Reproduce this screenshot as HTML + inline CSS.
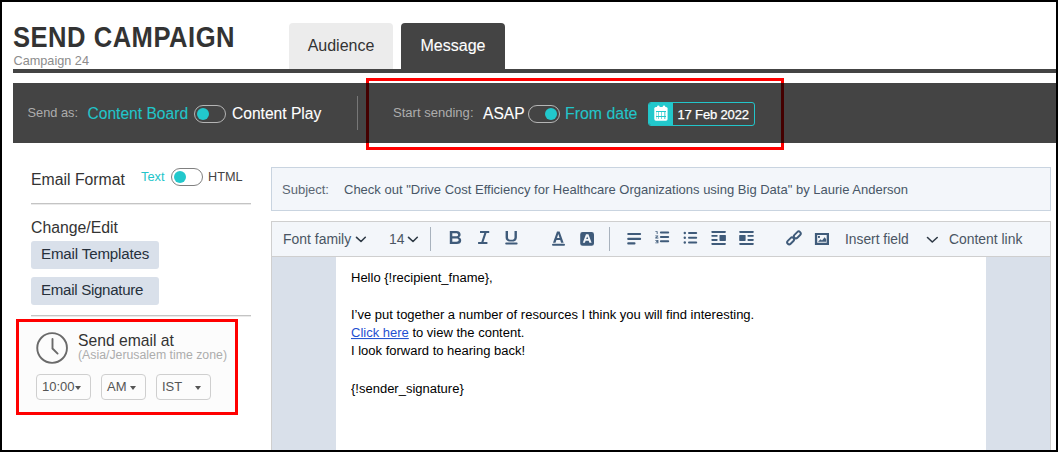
<!DOCTYPE html>
<html><head><meta charset="utf-8">
<style>
html,body{margin:0;padding:0}
body{width:1058px;height:452px;position:relative;overflow:hidden;background:#fff;font-family:"Liberation Sans",sans-serif}
.a{position:absolute;white-space:nowrap;line-height:1}
.frame{position:absolute;left:0;top:0;width:1058px;height:452px;box-sizing:border-box;border:2px solid #000;z-index:50;pointer-events:none}
.red{position:absolute;box-sizing:border-box;border:3px solid #ff0000;z-index:40}
.rd{position:absolute;background:#440000;z-index:41}
.tg{position:absolute;box-sizing:border-box;border:1px solid #b5b5b5;border-radius:10px}
.knob{position:absolute;width:12px;height:12px;border-radius:50%;background:#22c8cc}
.teal{color:#22c5c9}
.dd{position:absolute;box-sizing:border-box;border:1px solid #cfcfcf;border-radius:4px;top:374px;height:26px}
.caret{position:absolute;width:0;height:0;border-left:3.4px solid transparent;border-right:3.4px solid transparent;border-top:4px solid #555}
.ic{position:absolute}
</style></head><body>
<div class="frame"></div>

<!-- header -->
<div class="a" style="left:13px;top:23px;font-size:28.6px;font-weight:bold;color:#333;letter-spacing:0.55px;transform:scaleX(0.895);transform-origin:0 0">SEND CAMPAIGN</div>
<div class="a" style="left:13.5px;top:54.5px;font-size:12.7px;color:#8c8c8c">Campaign 24</div>

<div class="a" style="left:289px;top:23px;width:104px;height:46px;background:#ececec;border-radius:4px 4px 0 0"></div>
<div class="a" style="left:289px;top:38px;width:104px;text-align:center;font-size:16px;color:#333">Audience</div>
<div class="a" style="left:401px;top:23px;width:104px;height:46px;background:#444;border-radius:4px 4px 0 0"></div>
<div class="a" style="left:401px;top:38px;width:104px;text-align:center;font-size:16px;color:#fff;-webkit-text-stroke:0.1px #fff">Message</div>

<div class="a" style="left:13px;top:69px;width:1043px;height:4px;background:#444"></div>
<div class="a" style="left:13px;top:83px;width:1043px;height:60px;background:#444"></div>

<!-- bar contents -->
<div class="a" style="left:27.5px;top:107px;font-size:12.8px;color:#adadad">Send as:</div>
<div class="a teal" style="left:87.5px;top:106px;font-size:15.6px;-webkit-text-stroke:0.1px #22c5c9">Content Board</div>
<div class="tg" style="left:194px;top:105px;width:32px;height:18px"></div>
<div class="knob" style="left:197px;top:108px"></div>
<div class="a" style="left:232px;top:106px;font-size:15.6px;color:#fff;-webkit-text-stroke:0.1px #fff">Content Play</div>
<div class="a" style="left:357px;top:96px;width:1px;height:34px;background:#777"></div>

<div class="a" style="left:393px;top:106px;font-size:13.05px;color:#adadad">Start sending:</div>
<div class="a" style="left:483px;top:106px;font-size:15.6px;color:#fff;-webkit-text-stroke:0.1px #fff">ASAP</div>
<div class="tg" style="left:528px;top:105px;width:32px;height:18px"></div>
<div class="knob" style="left:545px;top:108px"></div>
<div class="a teal" style="left:565px;top:106px;font-size:15.9px;-webkit-text-stroke:0.1px #22c5c9">From date</div>

<div class="a" style="left:648px;top:102px;width:107px;height:24px;box-sizing:border-box;border:1px solid #22c5c9;border-radius:3px;overflow:hidden">
  <div style="position:absolute;left:0;top:0;width:24px;height:22px;background:#22c8cc"></div>
</div>
<svg class="ic" style="left:652px;top:104px" width="18" height="18" viewBox="0 0 18 18">
  <rect x="2.3" y="3" width="13.3" height="13.7" rx="1.6" fill="#fff"/>
  <rect x="5" y="1.5" width="2.6" height="3.5" rx="1.3" fill="#fff"/>
  <rect x="10.7" y="1.5" width="2.6" height="3.5" rx="1.3" fill="#fff"/>
  <g fill="#22c8cc">
    <rect x="4" y="7" width="10" height="1"/>
    <rect x="4" y="12" width="10" height="1"/>
  </g>
  <g fill="#22c8cc" opacity="0.6">
    <rect x="6" y="8" width="1" height="7"/>
    <rect x="9" y="8" width="1" height="7"/>
    <rect x="12" y="8" width="1" height="7"/>
  </g>
  <g fill="#22c8cc" opacity="0.3">
    <rect x="4" y="8" width="1" height="7"/>
    <rect x="13" y="8" width="1" height="7"/>
  </g>
</svg>
<div class="a" style="left:677.5px;top:108px;font-size:13px;letter-spacing:-0.15px;color:#fff;-webkit-text-stroke:0.25px #fff">17 Feb 2022</div>

<div class="red" style="left:366px;top:78px;width:418px;height:72px"></div>
<div class="rd" style="left:366px;top:83px;width:3px;height:60px"></div>
<div class="rd" style="left:781px;top:83px;width:3px;height:60px"></div>

<!-- left panel -->
<div class="a" style="left:31px;top:172px;font-size:15.8px;color:#333">Email Format</div>
<div class="a teal" style="left:141px;top:171px;font-size:12.8px">Text</div>
<div class="tg" style="left:171px;top:168px;width:32px;height:18px;border-color:#808080"></div>
<div class="knob" style="left:173.6px;top:171px;width:12.4px;height:12.4px"></div>
<div class="a" style="left:208px;top:171px;font-size:12.7px;color:#444">HTML</div>
<div class="a" style="left:31px;top:203px;width:220px;height:1px;background:#c4c4c4"></div><div class="a" style="left:31px;top:204px;width:220px;height:1px;background:#eaeaea"></div>

<div class="a" style="left:31px;top:220px;font-size:15.8px;color:#333">Change/Edit</div>
<div class="a" style="left:31px;top:241px;width:128px;height:28px;background:#d9e0ea;border-radius:3px"></div>
<div class="a" style="left:41px;top:246px;font-size:15.1px;letter-spacing:-0.15px;color:#26303c">Email Templates</div>
<div class="a" style="left:31px;top:277px;width:128px;height:28px;background:#d9e0ea;border-radius:3px"></div>
<div class="a" style="left:41px;top:282px;font-size:15.1px;letter-spacing:-0.3px;color:#26303c">Email Signature</div>
<div class="a" style="left:31px;top:315px;width:220px;height:1px;background:#c4c4c4"></div><div class="a" style="left:31px;top:316px;width:220px;height:1px;background:#eaeaea"></div>

<div class="a" style="left:16px;top:319px;width:222px;height:96px;background:#fcfcfc"></div>
<svg class="ic" style="left:35px;top:331px" width="34" height="34" viewBox="0 0 34 34">
  <circle cx="17.1" cy="17" r="14.85" fill="none" stroke="#6a6a6a" stroke-width="1.9"/>
  <path d="M17.5 8 V17.5 L22.6 22.6" fill="none" stroke="#6a6a6a" stroke-width="1.9" stroke-linecap="round"/>
</svg>
<div class="a" style="left:78px;top:333px;font-size:15.7px;color:#333">Send email at</div>
<div class="a" style="left:78px;top:348.5px;font-size:12.3px;color:#adadad">(Asia/Jerusalem time zone)</div>

<div class="dd" style="left:36px;width:55px"></div>
<div class="a" style="left:42px;top:380px;font-size:13px;color:#555">10:00</div>
<div class="caret" style="left:75px;top:386px"></div>
<div class="dd" style="left:101px;width:45px"></div>
<div class="a" style="left:107px;top:380px;font-size:13px;color:#555">AM</div>
<div class="caret" style="left:129.8px;top:386px"></div>
<div class="dd" style="left:156px;width:55px"></div>
<div class="a" style="left:162px;top:380px;font-size:13px;color:#555">IST</div>
<div class="caret" style="left:195px;top:386px"></div>

<div class="red" style="left:16px;top:319px;width:222px;height:96px"></div>

<!-- subject -->
<div class="a" style="left:271px;top:167px;width:780px;height:44px;box-sizing:border-box;border:1px solid #c9d4e0;background:#f3f6fa"></div>
<div class="a" style="left:282px;top:183px;font-size:13px;color:#5b6673">Subject:</div>
<div class="a" style="left:344px;top:183px;font-size:13px;color:#485667">Check out "Drive Cost Efficiency for Healthcare Organizations using Big Data" by Laurie Anderson</div>

<!-- editor -->
<div class="a" style="left:271px;top:221px;width:780px;height:235px;box-sizing:border-box;border:1px solid #cfcfcf;background:#fff"></div>
<div class="a" style="left:272px;top:222px;width:778px;height:34px;background:#f3f6fa;border-bottom:1px solid #cfcfcf"></div>
<div class="a" style="left:272px;top:257px;width:64px;height:195px;background:#d9e0ea"></div>
<div class="a" style="left:986px;top:257px;width:64px;height:195px;background:#d9e0ea"></div>

<div class="a" style="left:283px;top:233px;font-size:13.95px;color:#4a5563">Font family</div>
<div class="a" style="left:389px;top:233px;font-size:13.9px;color:#4a5563">14</div>
<div class="a" style="left:430px;top:227px;width:1px;height:24px;background:#a8b2bd"></div>
<div class="a" style="left:609px;top:227px;width:1px;height:24px;background:#a8b2bd"></div>
<div class="a" style="left:845px;top:233px;font-size:13.8px;color:#4a5563">Insert field</div>
<div class="a" style="left:949px;top:233px;font-size:13.9px;color:#4a5563">Content link</div>


<!-- toolbar icons -->
<svg class="ic" style="left:0;top:0;z-index:5" width="1058" height="452" viewBox="0 0 1058 452">
 <g fill="none" stroke="#2f3a46" stroke-width="1.6" stroke-linecap="round" stroke-linejoin="round">
  <path d="M356.5 237.3 L361 241.5 L365.3 237.3"/>
  <path d="M408.5 237.3 L413 241.5 L417.3 237.3"/>
  <path d="M927.5 237.5 L932.3 242 L937.2 237.5"/>
 </g>
 <g fill="#3f5b7a" stroke="none">
  <!-- B -->
  <path d="M449.8 231 H456.3 C459.3 231 460.6 232.6 460.6 234.5 C460.6 235.8 459.9 236.7 458.9 237.2 C460.3 237.7 461.2 238.8 461.2 240.4 C461.2 242.6 459.6 244 456.8 244 H449.8 Z M452.3 233.2 V236.3 H456 C457.4 236.3 458.1 235.7 458.1 234.75 C458.1 233.8 457.4 233.2 456 233.2 Z M452.3 238.4 V241.8 H456.4 C457.9 241.8 458.7 241.1 458.7 240.1 C458.7 239.1 457.9 238.4 456.4 238.4 Z"/>
  <!-- I -->
  <path d="M480 231 H489.2 V233.1 H486.5 L483.5 242 H487.4 V244.1 H478.1 V242 H481.3 L484.3 233.1 H480 Z"/>
  <!-- U -->
  <path d="M505.6 231 H508 V237.2 C508 239.1 509.3 239.8 511.3 239.8 C513.3 239.8 514.5 239.1 514.5 237.2 V231 H516.9 V237.4 C516.9 240.2 514.9 241.6 511.3 241.6 C507.7 241.6 505.6 240.2 505.6 237.4 Z"/>
  <rect x="505.2" y="242.6" width="12.4" height="1.9" rx="0.95"/>
  <!-- A underline -->
  <path d="M557 231.6 H559.6 L563.6 242.8 H561.1 L560.2 240 H556.4 L555.5 242.8 H553 Z M558.3 234 L557 238 H559.6 Z"/>
  <rect x="552" y="243.8" width="13" height="2" rx="1"/>
  <!-- A box -->
  <path fill-rule="evenodd" d="M582.6 232 H591.6 A2.4 2.4 0 0 1 594 234.4 V243.4 A2.4 2.4 0 0 1 591.6 245.8 H582.6 A2.4 2.4 0 0 1 580.2 243.4 V234.4 A2.4 2.4 0 0 1 582.6 232 Z M586 234.2 H588.4 L591.6 242.8 H589.4 L588.7 240.7 H585.6 L584.9 242.8 H582.8 Z M587.2 236.6 L586.2 239.1 H588.2 Z"/>
  <!-- align left -->
  <rect x="627.2" y="233" width="13.9" height="2.1" rx="1"/>
  <rect x="627.2" y="237.8" width="13.9" height="2.1" rx="1"/>
  <rect x="627.2" y="242.3" width="8.3" height="2.1" rx="1"/>
  <!-- numbered list -->
  <rect x="659.9" y="231.5" width="9.3" height="2" rx="1"/>
  <rect x="659.9" y="236" width="9.3" height="2" rx="1"/>
  <rect x="659.9" y="240.3" width="9.3" height="2" rx="1"/>
  <path d="M655.4 231.2 H657.6 V234 H656.7 V232.1 H655.4 Z"/>
  <path d="M655.3 235.4 H658.2 V236.2 L656.5 237.6 H658.4 V238.4 H655.3 V237.6 L657 236.2 H655.3 Z"/>
  <path d="M655.3 239.9 H658.4 V243.2 H655.3 V242.4 H657.4 V241.9 H656 V241.2 H657.4 V240.7 H655.3 Z"/>
  <!-- bullet list -->
  <circle cx="684.8" cy="233" r="1.2"/><circle cx="684.8" cy="237.8" r="1.2"/><circle cx="684.8" cy="242.5" r="1.2"/>
  <rect x="688" y="232" width="9.2" height="2" rx="1"/>
  <rect x="688" y="236.8" width="9.2" height="2" rx="1"/>
  <rect x="688" y="241.5" width="9.2" height="2" rx="1"/>
  <!-- image right -->
  <rect x="711.3" y="230.9" width="14.6" height="2" rx="0.8"/>
  <rect x="711.3" y="235" width="6.4" height="1.7" rx="0.8"/>
  <rect x="711.3" y="239.1" width="6.4" height="1.8" rx="0.8"/>
  <rect x="719.5" y="234.9" width="6.4" height="6" rx="0.6"/>
  <rect x="711.3" y="242.9" width="14.6" height="2" rx="0.8"/>
  <!-- image left -->
  <rect x="739.2" y="230.9" width="14.6" height="2" rx="0.8"/>
  <rect x="739.2" y="234.9" width="6.4" height="6" rx="0.6"/>
  <rect x="747.4" y="235" width="6.4" height="1.7" rx="0.8"/>
  <rect x="747.4" y="239.1" width="6.4" height="1.8" rx="0.8"/>
  <rect x="739.2" y="242.9" width="14.6" height="2" rx="0.8"/>
  <!-- image icon -->
  <path fill-rule="evenodd" d="M814.9 232.9 H829 V244.9 H814.9 Z M817.2 235 V242.7 H826.7 V235 Z"/>
  <rect x="818" y="236" width="1.9" height="1.9"/>
  <path d="M818 241.8 L820.5 239.2 L822 240.4 L824.6 237.3 L826.2 239.2 V241.8 Z"/>
 </g>
 <!-- link -->
 <g fill="none" stroke="#3f5b7a" stroke-width="1.9">
  <rect x="-2.05" y="-4" width="4.1" height="8" rx="2.05" transform="translate(797.3 234.9) rotate(45)"/>
  <rect x="-2.05" y="-4" width="4.1" height="8" rx="2.05" transform="translate(790.6 240.9) rotate(45)"/>
 </g>
</svg>

<!-- body -->
<div class="a" style="left:351px;top:271px;font-size:13px;color:#000;transform:scaleY(1.04);transform-origin:0 11px">Hello {!recipient_fname},</div>
<div class="a" style="left:351px;top:308px;font-size:13px;color:#000;transform:scaleY(1.04);transform-origin:0 11px">I’ve put together a number of resources I think you will find interesting.</div>
<div class="a" style="left:351px;top:326px;font-size:13px;color:#000;transform:scaleY(1.04);transform-origin:0 11px"><span style="color:#1f4fd1;text-decoration:underline">Click here</span> to view the content.</div>
<div class="a" style="left:351px;top:344px;font-size:13px;color:#000;transform:scaleY(1.04);transform-origin:0 11px">I look forward to hearing back!</div>
<div class="a" style="left:351px;top:382px;font-size:13px;color:#000;transform:scaleY(1.04);transform-origin:0 11px">{!sender_signature}</div>

</body></html>
